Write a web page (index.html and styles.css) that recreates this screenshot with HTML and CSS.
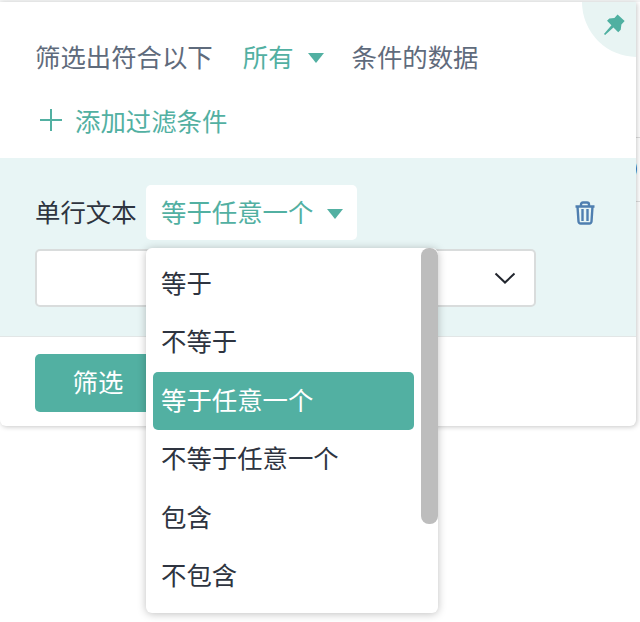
FILE: index.html
```html
<!DOCTYPE html>
<html lang="zh">
<head>
	<meta charset="utf-8" />
	<title>筛选</title>
	<link rel="stylesheet" href="styles.css">
</head>
<body>
	<div class="behind">
		<span class="behindLine behindLine1"></span>
		<span class="behindChar">)</span>
		<span class="behindLine behindLine2"></span>
	</div>
	<div class="panel">
		<div class="corner">
			<svg class="pinIcon" viewBox="0 0 24 24" width="23" height="23">
				<path d="M15.2 1.6 L22.6 8.4 L19.2 12.1 L18.5 17.6 L15.9 20 L10.9 15 L2.2 23 L1 21.8 L8.8 12.9 L4.2 8.2 L6.6 5.8 L11.9 5.2 Z" fill="#4fb0a1" />
			</svg>
		</div>
		<div class="matchRow">
			<span class="matchLabel">筛选出符合以下</span>
			<span class="matchValue">所有<i class="caret"></i></span>
			<span class="matchLabel">条件的数据</span>
		</div>
		<div class="addRow">
			<svg class="plusIcon" viewBox="0 0 24 24" width="24" height="24">
				<path d="M12 1 V23 M1 12 H23" stroke="#52b0a2" stroke-width="2" fill="none" />
			</svg>
			<span>添加过滤条件</span>
		</div>
		<div class="conditionBox">
			<div class="conditionTop">
				<span class="fieldName">单行文本</span>
				<div class="opSelect">等于任意一个<i class="caret"></i></div>
				<svg class="trashIcon" viewBox="0 0 22 24" width="22" height="24">
					<path d="M1.5 5.5 H20.5 M7 5.5 V3.5 Q7 1.5 9 1.5 H13 Q15 1.5 15 3.5 V5.5 M3.5 5.5 L4.5 20.5 Q4.7 22.5 6.7 22.5 H15.3 Q17.3 22.5 17.5 20.5 L18.5 5.5 M8.5 8 V20 M13.5 8 V20" stroke="#4f7fb0" stroke-width="2.4" fill="none" />
				</svg>
			</div>
			<div class="valueSelect">
				<svg class="chevIcon" viewBox="0 0 22 12" width="22" height="12">
					<path d="M1.5 1.5 L11 10.5 L20.5 1.5" stroke="#22262e" stroke-width="2" fill="none" />
				</svg>
			</div>
		</div>
		<div class="footerRow">
			<button class="filterBtn">筛选</button>
		</div>
	</div>
	<div class="opMenu">
		<div class="opItem">等于</div>
		<div class="opItem">不等于</div>
		<div class="opItem opActive">等于任意一个</div>
		<div class="opItem">不等于任意一个</div>
		<div class="opItem">包含</div>
		<div class="opItem">不包含</div>
		<div class="scrollThumb"></div>
	</div>
</body>
</html>
```

FILE: styles.css
```css
html, body { margin: 0; padding: 0; }
body { width: 640px; height: 622px; overflow: hidden; position: relative; background-color: #FFFFFF; font: normal 25.4px "Noto Sans CJK SC", "Noto Sans", sans-serif; color: #2e3440; }

/* the page peeking out to the right of and above the panel */
.behind { position: absolute; top: 0; left: 0; width: 640px; height: 232px; background: linear-gradient(#f3f4f4 0, #f3f4f4 2px, #FFFFFF 2px); }
.behindLine { position: absolute; left: 636px; width: 4px; height: 1px; background-color: #dddddd; }
.behindLine1 { top: 137px; }
.behindLine2 { top: 201px; }
.behindChar { position: absolute; left: 630px; top: 153px; font: normal 24px/28px "Liberation Sans", sans-serif; color: #222222; }

.panel { position: relative; box-sizing: border-box; margin-top: 2px; width: 636px; height: 424px; background-color: #FFFFFF; border-radius: 0 0 6px 6px; box-shadow: 1px 1px 5px rgba(0,0,0,0.22); overflow: hidden; }
.corner { position: absolute; top: -55px; right: -56px; width: 110px; height: 110px; border-radius: 50%; background-color: #e8f4f3; }
.pinIcon { position: absolute; left: 21px; top: 66px; }

.matchRow { display: flex; align-items: center; height: 36px; padding: 36px 0 0 35px; line-height: 36px; color: #5f6b7c; }
.matchValue { display: flex; align-items: center; margin: 0 28px 0 30px; color: #52b0a2; }
.caret { display: inline-block; margin: 4px 0 0 14px; width: 0; height: 0; border-style: solid; border-width: 10px 8.5px 0 8.5px; border-color: #52b0a2 transparent transparent transparent; }

.addRow { display: flex; align-items: center; gap: 12px; height: 36px; padding: 28px 0 0 39px; line-height: 36px; color: #52b0a2; }

.conditionBox { box-sizing: border-box; height: 179px; margin-top: 20px; padding: 27px 0 0 35px; background-color: #e8f5f5; border-bottom: 1px solid #e2e6e6; }
.conditionTop { display: flex; align-items: center; height: 55px; }
.fieldName { width: 111px; padding-bottom: 4px; color: #2e3440; }
.opSelect { display: flex; align-items: center; box-sizing: border-box; width: 211px; height: 55px; padding: 0 0 4px 15px; background-color: #FFFFFF; border-radius: 5px; color: #52b0a2; }
.opSelect .caret { margin-top: 7px; }
.trashIcon { margin-left: 217px; }
.valueSelect { display: flex; align-items: center; justify-content: flex-end; box-sizing: border-box; width: 501px; height: 58px; margin-top: 9px; padding-right: 18px; background-color: #FFFFFF; border: 2px solid #d9dcdc; border-radius: 5px; }

.footerRow { padding: 17px 0 0 35px; }
.filterBtn { display: block; width: 126px; height: 58px; padding: 0 0 5px; border: none; border-radius: 5px; background-color: #52b0a2; color: #FFFFFF; font: inherit; }

.opMenu { position: absolute; left: 146px; top: 248px; box-sizing: border-box; width: 292px; height: 365px; padding: 7px 24px 0 7px; background-color: #FFFFFF; border-radius: 6px; box-shadow: 0 1px 8px rgba(0,0,0,0.25); }
.opItem { box-sizing: border-box; height: 58.4px; padding-left: 8px; line-height: 54px; border-radius: 5px; color: #2e3440; }
.opActive { background-color: #52b0a2; color: #FFFFFF; }
.scrollThumb { position: absolute; top: 0; right: 0; width: 17px; height: 276px; border-radius: 8px; background-color: #bdbdbd; }
```
